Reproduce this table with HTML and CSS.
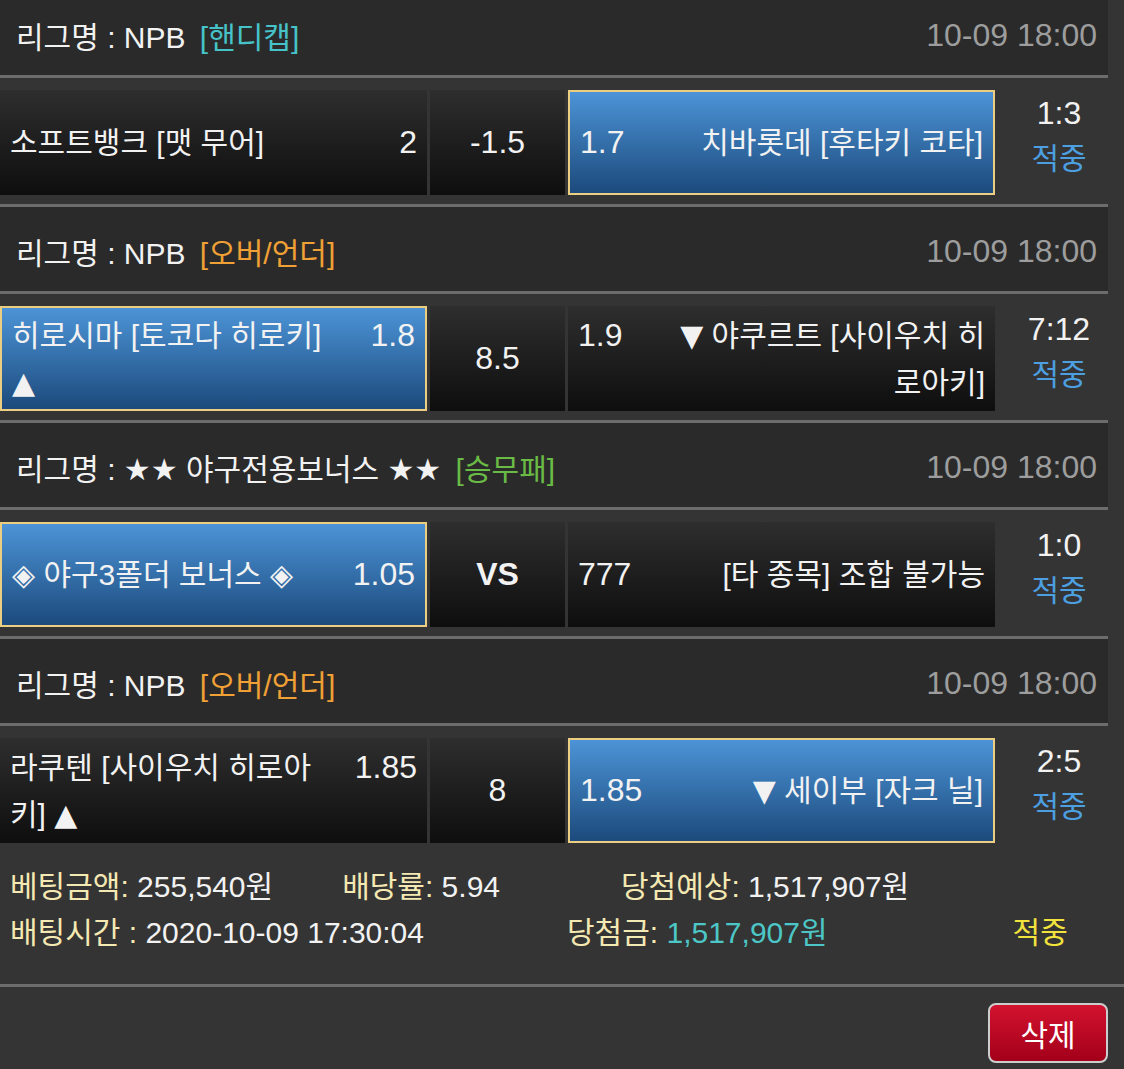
FILE: index.html
```html
<!DOCTYPE html>
<html lang="ko">

<head>
    <meta charset="UTF-8">
    <meta name="viewport" content="width=device-width, initial-scale=1.0">
    <title>베팅내역</title>
    <link rel="stylesheet" href="styles.css">
</head>

<body>
    <div class="bet-list">
        <div class="game">
            <div class="league">
                <span>리그명 : NPB <em class="type handicap">[핸디캡]</em></span>
                <span class="time">10-09 18:00</span>
            </div>
            <div class="match">
                <div class="cell team home"><span class="name">소프트뱅크 [맷 무어]</span><span class="odds">2</span></div>
                <div class="cell line">-1.5</div>
                <div class="cell team away picked"><span class="odds">1.7</span><span class="name">치바롯데 [후타키 코타]</span></div>
                <div class="result"><div class="score">1:3</div><div class="status">적중</div></div>
            </div>
        </div>
        <div class="game">
            <div class="league">
                <span>리그명 : NPB <em class="type overunder">[오버/언더]</em></span>
                <span class="time">10-09 18:00</span>
            </div>
            <div class="match">
                <div class="cell team home picked"><span class="name">히로시마 [토코다 히로키] <i class="arrow">▲</i></span><span class="odds">1.8</span></div>
                <div class="cell line">8.5</div>
                <div class="cell team away"><span class="odds">1.9</span><span class="name"><i class="arrow">▼</i> 야쿠르트 [사이우치 히로아키]</span></div>
                <div class="result"><div class="score">7:12</div><div class="status">적중</div></div>
            </div>
        </div>
        <div class="game">
            <div class="league">
                <span>리그명 : ★★ 야구전용보너스 ★★ <em class="type winlose">[승무패]</em></span>
                <span class="time">10-09 18:00</span>
            </div>
            <div class="match">
                <div class="cell team home picked"><span class="name">◈ 야구3폴더 보너스 ◈</span><span class="odds">1.05</span></div>
                <div class="cell line vs">VS</div>
                <div class="cell team away"><span class="odds">777</span><span class="name">[타 종목] 조합 불가능</span></div>
                <div class="result"><div class="score">1:0</div><div class="status">적중</div></div>
            </div>
        </div>
        <div class="game">
            <div class="league">
                <span>리그명 : NPB <em class="type overunder">[오버/언더]</em></span>
                <span class="time">10-09 18:00</span>
            </div>
            <div class="match">
                <div class="cell team home"><span class="name">라쿠텐 [사이우치 히로아키] <i class="arrow">▲</i></span><span class="odds">1.85</span></div>
                <div class="cell line">8</div>
                <div class="cell team away picked"><span class="odds">1.85</span><span class="name"><i class="arrow">▼</i> 세이부 [자크 닐]</span></div>
                <div class="result"><div class="score">2:5</div><div class="status">적중</div></div>
            </div>
        </div>
    </div>

    <div class="summary">
        <div class="summary-row">
            <span><b>베팅금액:</b> 255,540원</span>
            <span class="col-rate"><b>배당률:</b> 5.94</span>
            <span class="col-expect"><b>당첨예상:</b> 1,517,907원</span>
        </div>
        <div class="summary-row">
            <span><b>배팅시간 :</b> 2020-10-09 17:30:04</span>
            <span class="col-win"><b>당첨금:</b> <span class="win-amount">1,517,907원</span></span>
            <span class="col-status hit">적중</span>
        </div>
    </div>

    <div class="actions">
        <button class="btn-delete">삭제</button>
    </div>
</body>

</html>
```

FILE: styles.css
```css
body {
    margin: 0;
    background-color: #343434;
    color: #f2f2f2;
    font-family: "Liberation Sans", "DejaVu Sans", "Noto Sans CJK KR", sans-serif;
    font-size: 30px;
}

.bet-list {
    width: 1108px;
    margin-top: -9px;
}

.league {
    display: flex;
    justify-content: space-between;
    align-items: center;
    height: 87px;
    padding: 4px 11px 0 16px;
    box-sizing: border-box;
    background-color: #2a2a2a;
    border-bottom: 3px solid #6c6c6c;
}

.league .type {
    font-style: normal;
    margin-left: 6px;
}

.type.handicap {
    color: #46c3c8;
}

.type.overunder {
    color: #f0a035;
}

.type.winlose {
    color: #6abb46;
}

.league .time {
    color: #9d9d9d;
    font-size: 32px;
}

.match {
    display: flex;
    gap: 3px;
    padding: 12px 0 9px;
    border-bottom: 3px solid #6c6c6c;
}

.game:last-child .match {
    border-bottom: none;
}

.cell {
    box-sizing: border-box;
    height: 105px;
    line-height: 47px;
    background: linear-gradient(#2e2e2e, #0e0e0e);
}

.cell.line {
    width: 135px;
    display: flex;
    align-items: center;
    justify-content: center;
    font-size: 32px;
}

.cell.vs {
    font-weight: bold;
}

.team {
    width: 427px;
    padding: 0 10px;
    display: flex;
    flex-wrap: wrap;
    align-content: center;
    align-items: flex-start;
}

.team .name {
    flex: 0 0 81%;
}

.team .odds {
    flex: 1;
    font-size: 32px;
}

.team.home .odds {
    text-align: right;
}

.team.away .name {
    text-align: right;
}

.team.picked {
    border: 2px solid #ecce82;
    background: linear-gradient(#4c94d7, #1c4a7c);
}

.arrow {
    font-style: normal;
    font-family: "DejaVu Sans", sans-serif;
}

.result {
    flex: 1;
    padding-left: 12px;
    text-align: center;
    line-height: 46px;
}

.result .score {
    font-size: 32px;
}

.result .status {
    color: #4c9fe0;
}

.summary {
    padding: 12px 10px 28px;
    line-height: 46px;
    border-bottom: 3px solid #6c6c6c;
}

.summary-row {
    display: flex;
}

.summary b {
    font-weight: normal;
    color: #f4e9b2;
}

.col-rate {
    margin-left: 69px;
}

.col-expect {
    margin-left: 121px;
}

.col-win {
    margin-left: 143px;
}

.col-status {
    margin-left: 185px;
}

.win-amount {
    color: #4cc6c6;
}

.hit {
    color: #f2e23c;
}

.actions {
    display: flex;
    justify-content: flex-end;
    padding: 16px 16px 0;
}

.btn-delete {
    width: 120px;
    height: 60px;
    border: 2px solid #cdcdcd;
    border-radius: 8px;
    background: linear-gradient(#d3122e, #a3001a);
    color: #fff;
    font-family: "Liberation Sans", "Noto Sans CJK KR", sans-serif;
    font-size: 30px;
}
```
